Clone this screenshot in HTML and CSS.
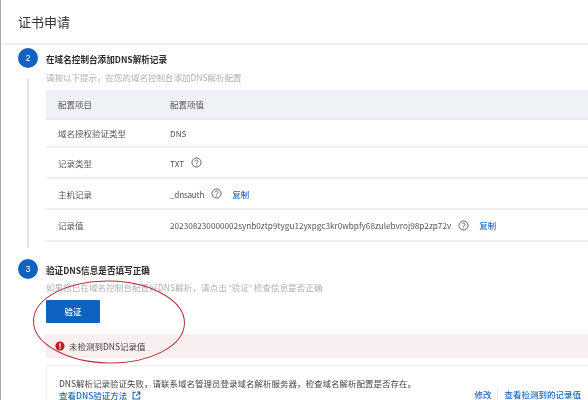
FILE: index.html
```html
<!DOCTYPE html>
<html lang="zh">
<head>
<meta charset="utf-8">
<title>证书申请</title>
<link rel="stylesheet" href="styles.css">
</head>
<body>
<div class="page">
  <header class="head"><h1>证书申请</h1></header>
  <section class="step step-two">
    <div class="rail"><span class="num">2</span><span class="line"></span></div>
    <div class="body">
      <h2>在域名控制台添加DNS解析记录</h2>
      <p class="hint">请按以下提示，在您的域名控制台添加DNS解析配置</p>
      <div class="table">
        <div class="row hd"><span class="k">配置项目</span><span class="v">配置项值</span></div>
        <div class="row r1"><span class="k">域名授权验证类型</span><span class="v">DNS</span></div>
        <div class="row r2"><span class="k">记录类型</span><span class="v">TXT<svg class="q" viewBox="0 0 12 12"><circle cx="6" cy="6" r="5"/><path d="M4.4 4.8a1.6 1.6 0 1 1 2.5 1.3c-.6.4-.9.7-.9 1.3"/><path d="M6 8.4v.9"/></svg></span></div>
        <div class="row r3"><span class="k">主机记录</span><span class="v"><span class="host">_dnsauth</span><svg class="q" viewBox="0 0 12 12"><circle cx="6" cy="6" r="5"/><path d="M4.4 4.8a1.6 1.6 0 1 1 2.5 1.3c-.6.4-.9.7-.9 1.3"/><path d="M6 8.4v.9"/></svg><a class="copy">复制</a></span></div>
        <div class="row r4"><span class="k">记录值</span><span class="v">202308230000002synb0ztp9tygu12yxpgc3kr0wbpfy68zulebvroj98p2zp72v<svg class="q" viewBox="0 0 12 12"><circle cx="6" cy="6" r="5"/><path d="M4.4 4.8a1.6 1.6 0 1 1 2.5 1.3c-.6.4-.9.7-.9 1.3"/><path d="M6 8.4v.9"/></svg><a class="copy">复制</a></span></div>
      </div>
    </div>
  </section>
  <section class="step step-three">
    <div class="rail"><span class="num">3</span></div>
    <div class="body">
      <h2>验证DNS信息是否填写正确</h2>
      <p class="hint tight">如果您已在域名控制台配置好DNS解析，请点击 <span class="quote">“</span>验证<span class="quote">”</span> 检查信息是否正确</p>
      <button class="verify">验证</button>
      <div class="alert">
        <svg class="err" viewBox="0 0 12 12"><circle cx="6" cy="6" r="5.5"/><rect x="5.2" y="2.6" width="1.6" height="4.4"/><rect x="5.2" y="7.9" width="1.6" height="1.6"/></svg>
        <span>未检测到DNS记录值</span>
      </div>
      <div class="notice">
        <div class="msg">
          <p>DNS解析记录验证失败，请联系域名管理员登录域名解析服务器，检查域名解析配置是否存在。</p>
          <a class="link">查看DNS验证方法<svg class="ext" viewBox="0 0 10 10"><path d="M4 1.5H1.2v7.3h7.3V6"/><path d="M5.5 1.2h3.3v3.3M8.6 1.4 4.6 5.4"/></svg></a>
        </div>
        <div class="acts"><a class="link">修改</a><a class="link sep">查看检测到的记录值</a></div>
      </div>
    </div>
  </section>
  <svg class="circle" viewBox="0 0 156 86"><ellipse cx="78" cy="43" rx="75.5" ry="41" transform="rotate(1 78 43)"/></svg>
</div>
</body>
</html>
```
FILE: styles.css
```css
* { box-sizing: border-box; }
html, body { margin: 0; padding: 0; }
body {
  width: 588px;
  height: 400px;
  overflow: hidden;
  background: #fff;
  font-family: "Noto Sans CJK SC", "Liberation Sans", sans-serif;
  color: #333;
}
.page {
  position: relative;
  height: 400px;
  overflow: hidden;
  border-left: 1px solid #a9a9a9;
  filter: blur(0.35px);
}
.head {
  height: 45px;
  padding: 12px 0 0 17px;
  border-bottom: 2px solid #f0f0f0;
}
h1 {
  margin: 0;
  font-size: 13px;
  line-height: 20px;
  font-weight: 400;
  color: #333;
}
.step { display: flex; }
.rail {
  width: 45px;
  flex: none;
  display: flex;
  flex-direction: column;
  align-items: flex-start;
  padding-left: 17px;
}
.step-two { padding-top: 3px; height: 203px; }
.step-three { height: 152px; padding-top: 11px; }
.num {
  width: 20px;
  height: 20px;
  flex: none;
  border-radius: 50%;
  background: #0f62c0;
  color: #fff;
  font: 9px/20px "Liberation Sans", sans-serif;
  text-align: center;
}
.line { width: 2px; flex: 1; margin: 10px 0 0 9px; background: #e3e5e8; }
.body { flex: 1; min-width: 0; }
h2 {
  margin: 0;
  padding-top: 5px;
  font-size: 8.6px;
  line-height: 13px;
  font-weight: 700;
  color: #2b2b2b;
  white-space: nowrap;
}
.hint {
  margin: 5px 0 0;
  font-size: 8.5px;
  line-height: 13px;
  color: #b0b0b0;
  white-space: nowrap;
}
.hint.tight { margin-top: 4px; letter-spacing: 0.1px; }
.quote { font-family: "Liberation Sans", sans-serif; }
.table { margin-top: 6px; }
.row {
  display: flex;
  align-items: center;
  font-size: 8.5px;
  color: #555;
  border-bottom: 2px solid #f1f1f1;
  white-space: nowrap;
}
.row.hd { height: 30px; background: #eef1f5; border-bottom-color: #e5e8ec; }
.r1 { height: 28px; }
.r2, .r3 { height: 31px; }
.r4 { height: 32px; }
.k { width: 124px; padding-left: 12px; flex: none; }
.v { display: flex; align-items: center; }
.r1 .v, .r2 .v, .r3 .v, .r4 .v { font-size: 8.2px; }
.host { letter-spacing: -0.25px; }
.q {
  width: 11px;
  height: 11px;
  margin-left: 7px;
  fill: none;
  stroke: #555;
  stroke-width: 1;
}
.copy {
  margin-left: 10px;
  color: #2a6fc4;
  font-weight: 500;
  font-size: 8.5px;
}
.verify {
  display: block;
  width: 54px;
  height: 23px;
  margin-top: 5px;
  padding: 0;
  border: 0;
  border-radius: 1px;
  background: #0f62c0;
  color: #fff;
  font: 500 8.5px/23px "Noto Sans CJK SC", sans-serif;
}
.alert {
  display: flex;
  align-items: center;
  gap: 4px;
  height: 24px;
  margin-top: 11px;
  padding-left: 9px;
  background: #f7eff0;
  font-size: 8.5px;
  color: #444;
}
.err { width: 10px; height: 10px; fill: #fff; }
.err circle { fill: #c8171d; }
.notice {
  display: flex;
  justify-content: space-between;
  height: 40px;
  margin-top: 7px;
  padding: 11px 0 0 12px;
  border: 1px solid #f0f0f0;
  border-right: 0;
  font-size: 8.5px;
  line-height: 12px;
  color: #444;
  white-space: nowrap;
}
.msg p { margin: 0; }
.link { color: #1f68bd; font-weight: 500; }
.msg .link { display: flex; align-items: center; }
.ext {
  width: 9px;
  height: 9px;
  margin-left: 5px;
  fill: none;
  stroke: #1f68bd;
  stroke-width: 1.2;
}
.acts { align-self: flex-start; display: flex; margin-top: 11px; padding-right: 7px; }
.sep { margin-left: 6px; padding-left: 6px; border-left: 1px solid #e6e6e6; }
.circle {
  position: absolute;
  left: 30px;
  top: 279px;
  width: 156px;
  height: 86px;
  fill: none;
  stroke: #bb2b3a;
  stroke-width: 1;
}
```
